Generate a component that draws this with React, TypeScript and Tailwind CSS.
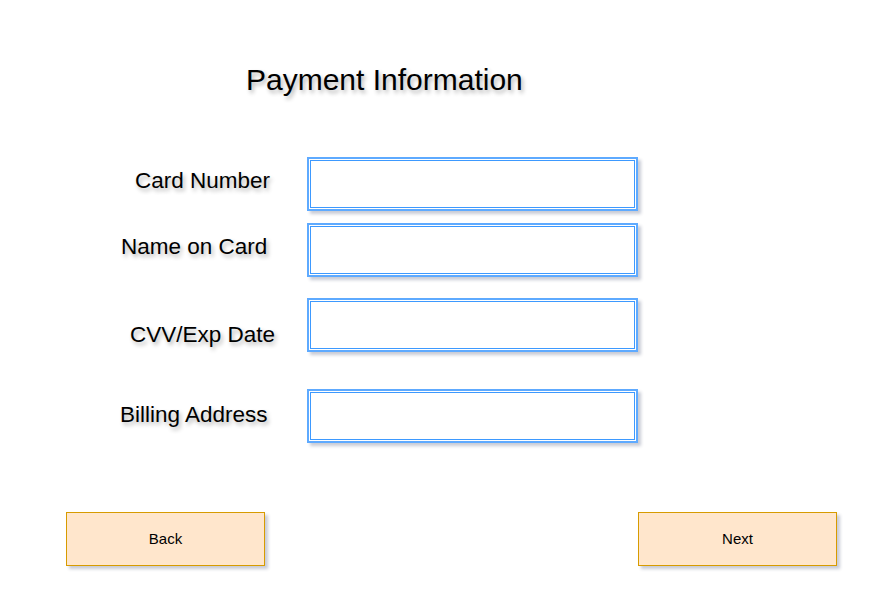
import React from 'react';

type Field = {
  label: string;
  left: string;
  top: string;
  gap: string;
};

const fields: Field[] = [
  { label: 'Card Number', left: 'pl-[135px]', top: 'mt-[11px]', gap: 'mt-[61px]' },
  { label: 'Name on Card', left: 'pl-[121px]', top: 'mt-[11px]', gap: 'mt-[12px]' },
  { label: 'CVV/Exp Date', left: 'pl-[130px]', top: 'mt-[24px]', gap: 'mt-[21px]' },
  { label: 'Billing Address', left: 'pl-[120px]', top: 'mt-[13px]', gap: 'mt-[37px]' },
];

const shadowText = '[text-shadow:2px_3px_4px_rgba(0,0,0,0.3)]';

const InputBox: React.FC = () => (
  <div className="w-[331px] h-[54px] border-2 border-[#5eaaff] bg-white p-[1px] shadow-[3px_3px_3px_rgba(40,50,90,0.25)]">
    <div className="w-full h-full border border-[#3d99ff] bg-white" />
  </div>
);

const Button: React.FC<{ label: string }> = ({ label }) => (
  <div className="w-[199px] h-[54px] flex items-center justify-center bg-[#ffe6cc] border border-[#d79b00] text-[15px] text-black shadow-[3px_3px_3px_rgba(40,50,90,0.25)]">
    {label}
  </div>
);

const App: React.FC = () => {
  return (
    <div className="w-[889px] h-[613px] bg-white font-['Liberation_Sans',Arial,sans-serif] text-black">
      <h1 className={`pt-[63px] pl-[246px] text-[30px] leading-[33px] ${shadowText}`}>
        Payment Information
      </h1>

      {fields.map((f) => (
        <div key={f.label} className={`flex items-start ${f.gap}`}>
          <div className={`w-[307px] shrink-0 ${f.left} ${f.top} text-[22.5px] leading-[26px] ${shadowText}`}>
            {f.label}
          </div>
          <InputBox />
        </div>
      ))}

      <div className="flex justify-between mt-[69px] pl-[66px] pr-[52px]">
        <Button label="Back" />
        <Button label="Next" />
      </div>
    </div>
  );
};

export default App;
